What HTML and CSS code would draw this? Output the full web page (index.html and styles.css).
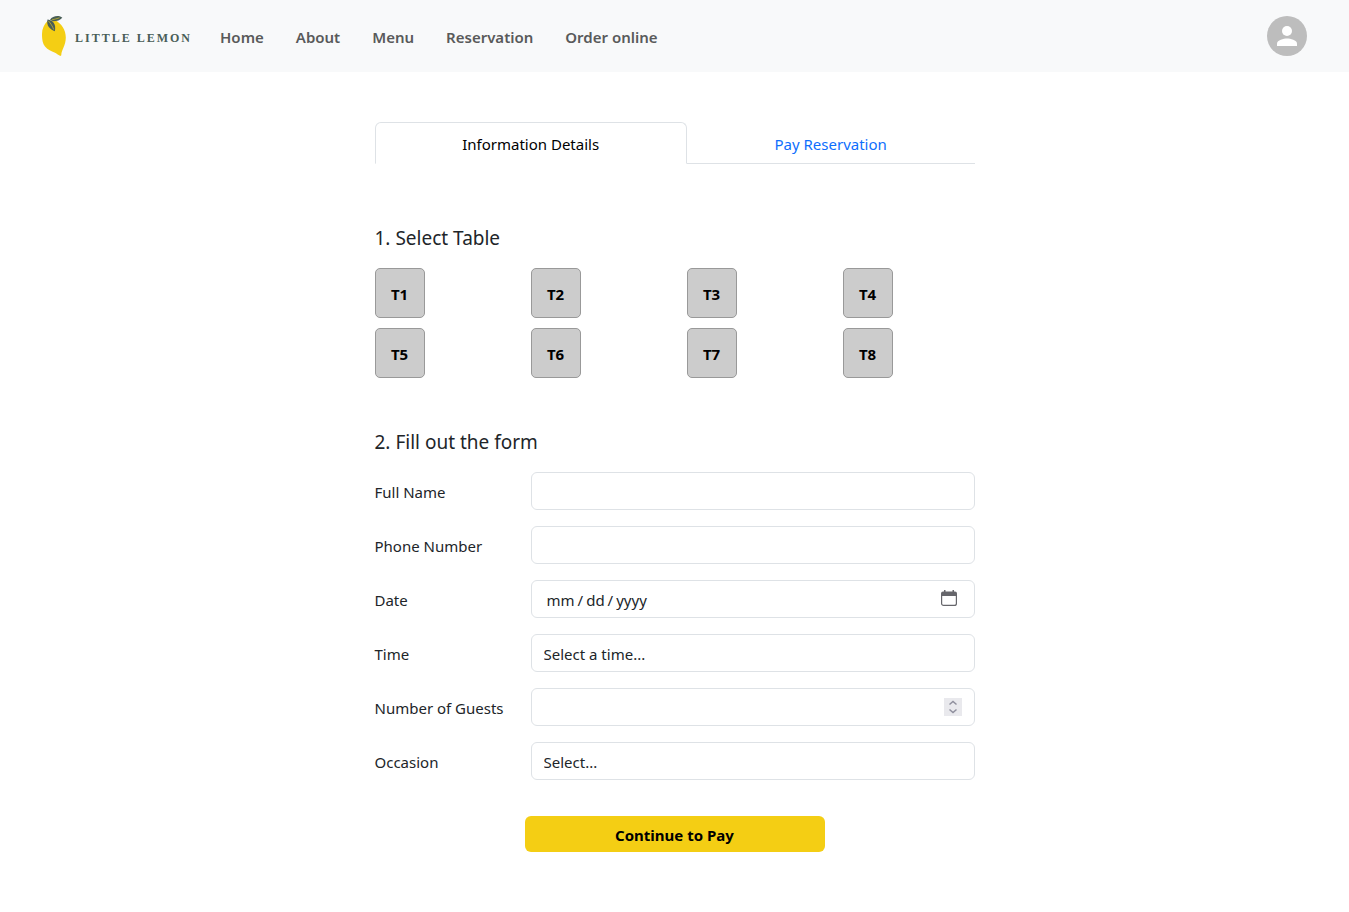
FILE: index.html
```html
<!DOCTYPE html>
<html lang="en">
<head>
<meta charset="utf-8">
<meta name="viewport" content="width=device-width, initial-scale=1">
<title>Little Lemon - Reservation</title>
<link rel="stylesheet" href="styles.css">
</head>
<body>
<header class="navbar">
  <a class="brand" href="#" aria-label="Little Lemon">
    <svg class="brand-mark" viewBox="0 0 25 42" aria-hidden="true">
      <path fill="#f4ce14" d="M5.500 6C2 9.500 0 14 0 19c0 6 .8 9.500 3 12.500 2.800 3.500 6.500 4.500 9.500 6 2.200 1 3.500 2.500 5.500 3.300.9.300 1.300-.2 1.300-1 .1-2.300 1-4.300 2-6.800 1.500-3.500 2.500-6.500 2.500-10.500C23.800 15 19.500 8.500 13 5z"/>
      <path fill="#495e57" d="M8 4.800C9.500 2.300 12.500 1.100 15.500 1.100c2 0 3.500.6 4.800 1.700-2 2.500-5.300 3.500-9.300 3.500z"/>
      <path fill="#495e57" d="M5.500 4.500c3.800.3 7 3 7.600 7 .2 1.700.1 3.300-.3 4.800C8 14.500 4 10.500 5.500 4.500z"/>
      <path fill="none" stroke="#c5b52c" stroke-width=".8" d="M6.500 6c2.200 2.500 4 5.200 5.200 8.500M10 4.800c2.800-.5 5-1.200 7.500-2"/>
    </svg>
    <span class="brand-name">LITTLE LEMON</span>
  </a>
  <nav class="nav-links" aria-label="Main">
    <a href="#">Home</a>
    <a href="#">About</a>
    <a href="#">Menu</a>
    <a href="#">Reservation</a>
    <a href="#">Order online</a>
  </nav>
  <button class="avatar" type="button" aria-label="Account">
    <svg viewBox="0 0 40 40" aria-hidden="true">
      <circle cx="20" cy="15" r="5" fill="#fff"/>
      <path fill="#fff" d="M10 30v-2.500c0-3.300 6.700-5 10-5s10 1.700 10 5V30z"/>
    </svg>
  </button>
</header>
<main class="page">
  <div class="tabs" role="tablist">
    <button class="tab tab-active" type="button" role="tab" aria-selected="true">Information Details</button>
    <button class="tab" type="button" role="tab" aria-selected="false">Pay Reservation</button>
  </div>
  <form class="reservation">
    <h2>1. Select Table</h2>
    <div class="tables">
      <button type="button">T1</button>
      <button type="button">T2</button>
      <button type="button">T3</button>
      <button type="button">T4</button>
      <button type="button">T5</button>
      <button type="button">T6</button>
      <button type="button">T7</button>
      <button type="button">T8</button>
    </div>
    <h2>2. Fill out the form</h2>
    <div class="fields">
      <label for="name">Full Name</label>
      <div class="field"><input id="name" type="text"></div>
      <label for="phone">Phone Number</label>
      <div class="field"><input id="phone" type="tel"></div>
      <label for="date">Date</label>
      <div class="field">
        <input id="date" type="date">
        <svg class="calendar-icon" viewBox="0 0 16 16" aria-hidden="true">
          <path fill="#66666b" d="M3 0h1.500v2H3zM11.500 0H13v2h-1.500zM2 1.500h12a2 2 0 0 1 2 2V6H0V3.500a2 2 0 0 1 2-2z"/>
          <path fill="none" stroke="#66666b" stroke-width="1.200" d="M.6 5v8.400a2 2 0 0 0 2 2h10.800a2 2 0 0 0 2-2V5"/>
        </svg>
      </div>
      <label for="time">Time</label>
      <div class="field"><select id="time"><option>Select a time...</option></select></div>
      <label for="guests">Number of Guests</label>
      <div class="field">
        <input id="guests" type="number">
        <svg class="spinner-icon" viewBox="0 0 18 18" aria-hidden="true">
          <path fill="#e9e9ed" d="M0 0h18v18H0z"/>
          <path fill="none" stroke="#8f8f9d" stroke-width="1.500" d="M5.500 6.500 9 3.500l3.500 3M5.500 11.500l3.500 3 3.500-3"/>
        </svg>
      </div>
      <label for="occasion">Occasion</label>
      <div class="field"><select id="occasion"><option>Select...</option></select></div>
    </div>
    <button class="submit" type="submit">Continue to Pay</button>
  </form>
</main>
</body>
</html>
```
FILE: styles.css
```css
* {
  box-sizing: border-box;
}

body {
  margin: 0;
  background: #fff;
  color: #212529;
  font: 15px/24px "Segoe UI", "Noto Sans", "Open Sans", sans-serif;
}

button,
input,
select {
  font: inherit;
  color: inherit;
}

.navbar {
  display: flex;
  align-items: center;
  height: 72px;
  padding: 0 42px;
  background: #f8f9fa;
}

.brand {
  display: flex;
  align-items: center;
  gap: 8px;
  color: #495e57;
  text-decoration: none;
}

.brand-mark {
  width: 25px;
  height: 42px;
}

.brand-name {
  padding-top: 3px;
  font: bold 12px/16px "Liberation Serif", serif;
  letter-spacing: 2px;
  white-space: nowrap;
}

.nav-links {
  display: flex;
  gap: 32px;
  margin-left: 28px;
  padding-top: 2px;
}

.nav-links a {
  color: #595a5a;
  font-weight: 600;
  text-decoration: none;
  white-space: nowrap;
}

.avatar {
  width: 40px;
  height: 40px;
  margin-left: auto;
  padding: 0;
  border: 0;
  border-radius: 50%;
  background: #bdbdbd;
}

.avatar svg {
  display: block;
}

.page {
  max-width: 600px;
  margin: 50px auto 60px;
}

.tabs {
  display: flex;
  border-bottom: 1px solid #dee2e6;
}

.tab {
  flex: 1 1 auto;
  height: 42px;
  margin-bottom: -1px;
  padding: 2px 16px 0;
  border: 1px solid transparent;
  border-radius: 6px 6px 0 0;
  background: none;
  color: #0d6efd;
}

.tab-active {
  border-color: #dee2e6 #dee2e6 #fff;
  background: #fff;
  color: #000;
}

.reservation {
  display: flex;
  flex-direction: column;
  padding-top: 62px;
}

h2 {
  margin: 0 0 18px;
  font-size: 19px;
  font-weight: 400;
  line-height: 24px;
}

.tables {
  display: grid;
  grid-template-columns: repeat(4, 1fr);
  gap: 10px 24px;
  margin-bottom: 52px;
}

.tables button {
  width: 50px;
  height: 50px;
  padding: 2px 0 0;
  border: 1px solid #999;
  border-radius: 5px;
  background: #ccc;
  color: #000;
  font-weight: 700;
}

.fields {
  display: grid;
  grid-template-columns: 132px 1fr;
  gap: 16px 24px;
  align-items: center;
}

.fields label {
  padding-top: 2px;
  white-space: nowrap;
}

.field {
  position: relative;
}

.field input,
.field select {
  display: block;
  width: 100%;
  height: 38px;
  padding: 2px 12px 0;
  border: 1px solid #dee2e6;
  border-radius: 6px;
  background: #fff;
  appearance: none;
}

.field input[type="date"] {
  padding-left: 14px;
}

.field input::-webkit-datetime-edit-text {
  padding: 0 2px;
}

.field input::-webkit-calendar-picker-indicator {
  opacity: 0;
}

.field input::-webkit-inner-spin-button {
  opacity: 0;
}

.calendar-icon,
.spinner-icon {
  position: absolute;
  pointer-events: none;
}

.calendar-icon {
  top: 10px;
  right: 18px;
  width: 16px;
  height: 16px;
}

.spinner-icon {
  top: 10px;
  right: 13px;
  width: 18px;
  height: 18px;
}

.submit {
  align-self: center;
  width: 50%;
  height: 36px;
  margin-top: 36px;
  padding: 2px 0 0;
  border: 0;
  border-radius: 6px;
  background: #f4ce14;
  color: #000;
  font-weight: 700;
}
```
